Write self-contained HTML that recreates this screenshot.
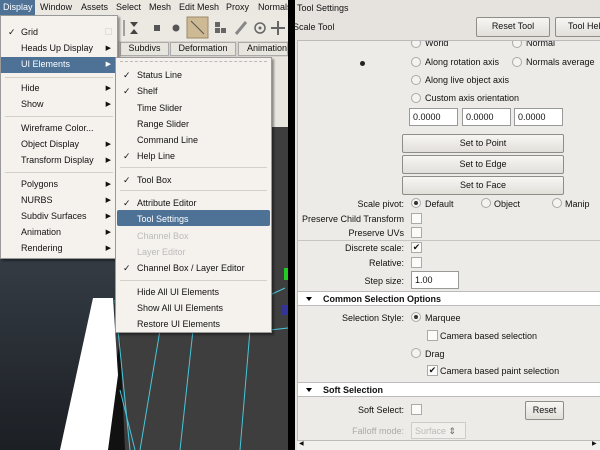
<!DOCTYPE html>
<html><head><meta charset="utf-8"><style>
*{margin:0;padding:0;box-sizing:border-box}
body{width:600px;height:450px;overflow:hidden;position:relative;background:#3a3a3a;font-family:"Liberation Sans",sans-serif;font-size:9px;color:#111}
.a{position:absolute;white-space:nowrap}
.mi{position:absolute;left:20px;white-space:nowrap}
.ar{position:absolute;right:6px;font-size:7px}
.ck{position:absolute;left:7px}
.sep{position:absolute;left:4px;right:4px;height:1px;background:#d4d0c8}
.rad{position:absolute;width:10px;height:10px;border:1px solid #aaa;border-radius:50%;background:#f4f3f0}
.rad.on::after{content:"";position:absolute;left:2px;top:2px;width:4px;height:4px;border-radius:50%;background:#333}
.cb{position:absolute;width:11px;height:11px;border:1px solid #aaa;background:#fbfbfa}
.btn{position:absolute;border:1px solid #8f8d88;border-radius:2px;background:linear-gradient(#f7f6f3,#e2dfda);text-align:center;line-height:17px}
.fld{position:absolute;border:1px solid #999;background:#fff;padding-left:3px;line-height:16px}
.r{text-align:right;position:absolute;white-space:nowrap}
.hdr{position:absolute;left:298px;width:302px;background:#fff;font-weight:bold;height:15px;line-height:15px;padding-left:25px;border-top:1px solid #bbb;border-bottom:1px solid #bbb}
.hdr::before{content:"";position:absolute;left:8px;top:5px;border-left:3px solid transparent;border-right:3px solid transparent;border-top:4px solid #000}
</style></head><body>
<!-- viewport -->
<div class="a" style="left:0;top:55px;width:120px;height:395px;background:linear-gradient(#4e5a66,#1c1f24)"></div>
<div class="a" style="left:115px;top:55px;width:173px;height:395px;background:#3e3e3e"></div>
<svg class="a" style="left:0;top:0" width="290" height="450">
<polygon points="100,450 120,340 125,450" fill="#111"/>
<polygon points="93,298 113,298 118,375 108,450 60,450" fill="#fff"/>
<g stroke="#49c6db" stroke-width="1" fill="none">
<line x1="115" y1="300" x2="130" y2="450"/><line x1="160" y1="330" x2="140" y2="450"/><line x1="193" y1="330" x2="180" y2="450"/><line x1="250" y1="330" x2="240" y2="450"/>
<line x1="120" y1="390" x2="135" y2="450"/><line x1="270" y1="330" x2="288" y2="328"/><line x1="270" y1="295" x2="285" y2="288"/>
</g>
<rect x="284" y="268" width="4" height="12" fill="#2c2"/><rect x="282" y="305" width="6" height="10" fill="#339"/>
</svg>
<!-- menubar & toolbars -->
<div class="a" style="left:0;top:0;width:288px;height:15px;background:#ebe8e2"></div>
<div class="a" style="left:0;top:0;width:35px;height:15px;background:#4d7296"></div>
<div class="a" style="left:3px;top:2px;color:#fff">Display</div>
<div class="a" style="left:40px;top:2px">Window</div>
<div class="a" style="left:81px;top:2px">Assets</div>
<div class="a" style="left:116px;top:2px">Select</div>
<div class="a" style="left:149px;top:2px">Mesh</div>
<div class="a" style="left:179px;top:2px">Edit Mesh</div>
<div class="a" style="left:226px;top:2px">Proxy</div>
<div class="a" style="left:258px;top:2px">Normals</div>
<div class="a" style="left:118px;top:15px;width:170px;height:26px;background:#ece9e3"></div>
<svg class="a" style="left:118px;top:15px" width="170" height="26">
<line x1="6" y1="5" x2="6" y2="21" stroke="#555"/>
<path d="M12 7h8l-4 5zM12 19h8l-4-5z" fill="#444"/>
<rect x="36" y="10" width="6" height="6" fill="#555"/>
<circle cx="58" cy="13" r="3.5" fill="#555"/>
<rect x="69" y="2" width="21" height="21" fill="#cdb994" stroke="#9a8a6a"/>
<line x1="73" y1="6" x2="86" y2="19" stroke="#555"/>
<rect x="97" y="7" width="5" height="5" fill="#666"/><rect x="97" y="13" width="5" height="5" fill="#666"/><rect x="103" y="13" width="5" height="5" fill="#666"/>
<path d="M118 19l10-12" stroke="#888" stroke-width="3"/>
<circle cx="142" cy="13" r="5" fill="none" stroke="#666" stroke-width="1.5"/><circle cx="142" cy="13" r="1.5" fill="#666"/>
<path d="M160 6v14M153 13h14" stroke="#666" stroke-width="2"/>
</svg>
<div class="a" style="left:118px;top:41px;width:170px;height:16px;background:#d7d3cc"></div>
<div class="a" style="left:120px;top:42px;width:49px;height:14px;background:#e8e5df;border:1px solid #aaa;text-align:center">Subdivs</div>
<div class="a" style="left:170px;top:42px;width:66px;height:14px;background:#e8e5df;border:1px solid #aaa;text-align:center">Deformation</div>
<div class="a" style="left:238px;top:42px;width:50px;height:14px;background:#e8e5df;border:1px solid #aaa;padding-left:8px">Animation</div>
<div class="a" style="left:270px;top:57px;width:18px;height:70px;background:#e8e5df"></div>
<!-- main menu -->
<div class="a" style="left:0;top:15px;width:118px;height:244px;background:#f5f2ed;border:1px solid #999;box-shadow:2px 2px 2px rgba(0,0,0,.4)">
<div class="ck" style="top:11px">✓</div><div class="mi" style="top:11px">Grid</div><div class="a" style="left:104px;top:12px;width:7px;height:7px;border:1px solid #ddd"></div>
<div class="mi" style="top:27px">Heads Up Display</div><div class="ar" style="top:28px">▶</div>
<div class="a" style="left:0;top:41px;width:116px;height:16px;background:#4d7296"></div>
<div class="mi" style="top:43px;color:#fff">UI Elements</div><div class="ar" style="top:44px;color:#fff">▶</div>
<div class="sep" style="top:61px"></div>
<div class="mi" style="top:67px">Hide</div><div class="ar" style="top:68px">▶</div>
<div class="mi" style="top:83px">Show</div><div class="ar" style="top:84px">▶</div>
<div class="sep" style="top:100px"></div>
<div class="mi" style="top:107px">Wireframe Color...</div>
<div class="mi" style="top:123px">Object Display</div><div class="ar" style="top:124px">▶</div>
<div class="mi" style="top:139px">Transform Display</div><div class="ar" style="top:140px">▶</div>
<div class="sep" style="top:156px"></div>
<div class="mi" style="top:163px">Polygons</div><div class="ar" style="top:164px">▶</div>
<div class="mi" style="top:179px">NURBS</div><div class="ar" style="top:180px">▶</div>
<div class="mi" style="top:195px">Subdiv Surfaces</div><div class="ar" style="top:196px">▶</div>
<div class="mi" style="top:211px">Animation</div><div class="ar" style="top:212px">▶</div>
<div class="mi" style="top:227px">Rendering</div><div class="ar" style="top:228px">▶</div>
</div>
<!-- submenu -->
<div class="a" style="left:115px;top:57px;width:157px;height:276px;background:#f5f2ed;border:1px solid #999;box-shadow:2px 2px 2px rgba(0,0,0,.4)">
<div class="a" style="left:4px;top:3px;width:147px;border-top:1px dashed #bbb"></div>
<div class="ck" style="top:12px">✓</div><div class="mi" style="left:21px;top:12px">Status Line</div>
<div class="ck" style="top:28px">✓</div><div class="mi" style="left:21px;top:28px">Shelf</div>
<div class="mi" style="left:21px;top:45px">Time Slider</div>
<div class="mi" style="left:21px;top:61px">Range Slider</div>
<div class="mi" style="left:21px;top:77px">Command Line</div>
<div class="ck" style="top:93px">✓</div><div class="mi" style="left:21px;top:93px">Help Line</div>
<div class="sep" style="top:109px"></div>
<div class="ck" style="top:117px">✓</div><div class="mi" style="left:21px;top:117px">Tool Box</div>
<div class="sep" style="top:132px"></div>
<div class="ck" style="top:140px">✓</div><div class="mi" style="left:21px;top:140px">Attribute Editor</div>
<div class="a" style="left:1px;top:152px;width:153px;height:16px;background:#4d7296;border-radius:2px"></div>
<div class="mi" style="left:21px;top:156px;color:#fff">Tool Settings</div>
<div class="mi" style="left:21px;top:173px;color:#bbb">Channel Box</div>
<div class="mi" style="left:21px;top:189px;color:#bbb">Layer Editor</div>
<div class="ck" style="top:205px">✓</div><div class="mi" style="left:21px;top:205px">Channel Box / Layer Editor</div>
<div class="sep" style="top:222px"></div>
<div class="mi" style="left:21px;top:229px">Hide All UI Elements</div>
<div class="mi" style="left:21px;top:245px">Show All UI Elements</div>
<div class="mi" style="left:21px;top:261px">Restore UI Elements</div>
</div>
<!-- separator -->
<div class="a" style="left:288px;top:0;width:7px;height:450px;background:#000"></div>
<!-- right panel -->
<div class="a" style="left:295px;top:0;width:305px;height:450px;background:#e6e3de"></div>
<div class="a" style="left:297px;top:3px">Tool Settings</div>
<div class="a" style="left:293px;top:22px">Scale Tool</div>
<div class="btn" style="left:476px;top:17px;width:74px;height:20px">Reset Tool</div>
<div class="btn" style="left:555px;top:17px;width:60px;height:20px;text-align:left;padding-left:12px">Tool Help</div>
<div class="a" style="left:297px;top:40px;width:303px;height:400px;background:#edebe7;border-left:1px solid #bbb;border-top:1px solid #bbb;overflow:hidden">
<div class="rad" style="left:113px;top:-3px"></div><div class="a" style="left:127px;top:-3px">World</div>
<div class="rad" style="left:214px;top:-3px"></div><div class="a" style="left:228px;top:-3px">Normal</div>
</div>
<div class="a" style="left:360px;top:61px;width:5px;height:5px;border-radius:50%;background:#222"></div>
<div class="rad" style="left:411px;top:57px"></div><div class="a" style="left:425px;top:57px">Along rotation axis</div>
<div class="rad" style="left:512px;top:57px"></div><div class="a" style="left:526px;top:57px">Normals average</div>
<div class="rad" style="left:411px;top:75px"></div><div class="a" style="left:425px;top:75px">Along live object axis</div>
<div class="rad" style="left:411px;top:93px"></div><div class="a" style="left:425px;top:93px">Custom axis orientation</div>
<div class="fld" style="left:409px;top:108px;width:49px;height:18px">0.0000</div>
<div class="fld" style="left:462px;top:108px;width:49px;height:18px">0.0000</div>
<div class="fld" style="left:514px;top:108px;width:49px;height:18px">0.0000</div>
<div class="btn" style="left:402px;top:134px;width:162px;height:19px">Set to Point</div>
<div class="btn" style="left:402px;top:155px;width:162px;height:19px">Set to Edge</div>
<div class="btn" style="left:402px;top:176px;width:162px;height:19px">Set to Face</div>
<div class="r" style="right:196px;top:199px">Scale pivot:</div>
<div class="rad on" style="left:411px;top:198px"></div><div class="a" style="left:425px;top:199px">Default</div>
<div class="rad" style="left:481px;top:198px"></div><div class="a" style="left:494px;top:199px">Object</div>
<div class="rad" style="left:552px;top:198px"></div><div class="a" style="left:565px;top:199px">Manip</div>
<div class="r" style="right:196px;top:214px">Preserve Child Transform</div><div class="cb" style="left:411px;top:213px"></div>
<div class="r" style="right:196px;top:228px">Preserve UVs</div><div class="cb" style="left:411px;top:227px"></div>
<div class="a" style="left:298px;top:240px;width:302px;height:1px;background:#c8c5c0"></div>
<div class="r" style="right:196px;top:243px">Discrete scale:</div><div class="cb" style="left:411px;top:242px;font-size:9px;line-height:9px;text-align:center">✔</div>
<div class="r" style="right:196px;top:258px">Relative:</div><div class="cb" style="left:411px;top:257px"></div>
<div class="r" style="right:196px;top:276px">Step size:</div><div class="fld" style="left:411px;top:271px;width:48px;height:18px">1.00</div>
<div class="hdr" style="top:291px">Common Selection Options</div>
<div class="r" style="right:196px;top:313px">Selection Style:</div>
<div class="rad on" style="left:411px;top:312px"></div><div class="a" style="left:425px;top:313px">Marquee</div>
<div class="cb" style="left:427px;top:330px"></div><div class="a" style="left:440px;top:331px">Camera based selection</div>
<div class="rad" style="left:411px;top:348px"></div><div class="a" style="left:425px;top:349px">Drag</div>
<div class="cb" style="left:427px;top:365px;font-size:9px;line-height:9px;text-align:center">✔</div><div class="a" style="left:440px;top:366px">Camera based paint selection</div>
<div class="hdr" style="top:382px">Soft Selection</div>
<div class="r" style="right:196px;top:405px">Soft Select:</div><div class="cb" style="left:411px;top:404px"></div>
<div class="btn" style="left:525px;top:401px;width:39px;height:19px">Reset</div>
<div class="r" style="right:196px;top:426px;color:#aaa">Falloff mode:</div>
<div class="fld" style="left:411px;top:422px;width:55px;height:17px;color:#bbb;background:#f0efec;border-color:#ccc">Surface <span style="color:#666">⇕</span></div>
<div class="a" style="left:297px;top:440px;width:303px;height:10px;background:#f2f0ec;border-top:1px solid #bbb"></div>
<div class="a" style="left:299px;top:440px;font-size:6px">◀</div><div class="a" style="left:592px;top:440px;font-size:6px">▶</div>
</body></html>
